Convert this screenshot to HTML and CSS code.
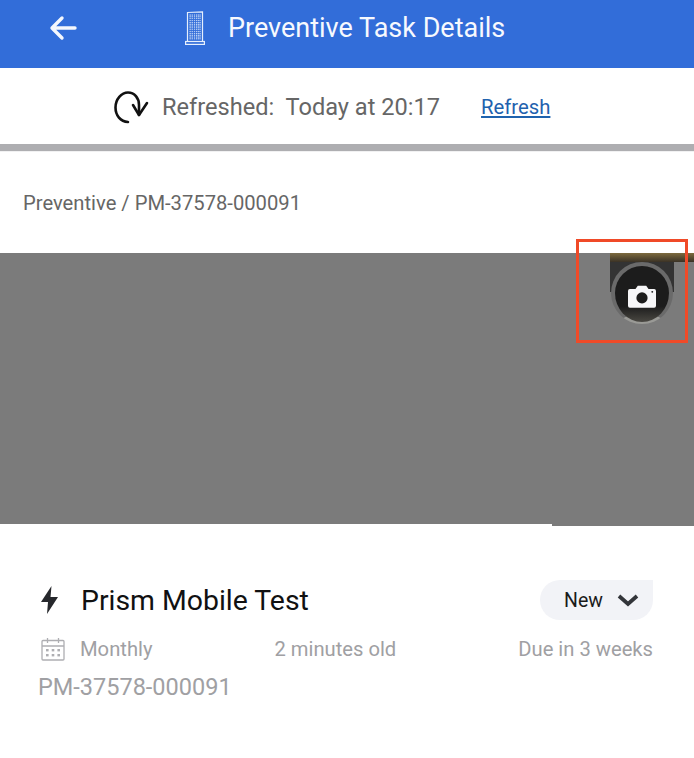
FILE: index.html
```html
<!DOCTYPE html>
<html lang="en">
<head>
<meta charset="UTF-8"/>
<title>Preventive Task Details</title>
<link rel="stylesheet" href="styles.css">
</head>
<body>
<header class="topbar">
 <svg class="back-icon" width="30" height="26" viewBox="0 0 30 26">
  <path d="M27 13H4M14 3L4 13l10 10" fill="none" stroke="#f4f7fd" stroke-width="3.400" stroke-linecap="round" stroke-linejoin="round"/>
 </svg>
 <svg class="building-icon" width="20" height="34" viewBox="0 0 20 34">
  <defs>
   <pattern id="windows" width="2.200" height="2.200" patternUnits="userSpaceOnUse">
    <rect width="1.300" height="1.300" fill="#cfdff9"/>
   </pattern>
  </defs>
  <path d="M2.500 1.500L17.500 .8V30.500H2.500z" fill="none" stroke="#e6effd" stroke-width="1.200"/>
  <rect x="4.200" y="3" width="11.800" height="26" fill="url(#windows)"/>
  <rect x=".6" y="30.500" width="18.800" height="2.900" fill="none" stroke="#e6effd" stroke-width="1.200"/>
 </svg>
 <h1 class="title">Preventive Task Details</h1>
</header>

<div class="refresh-bar">
 <svg class="refresh-icon" width="36" height="34" viewBox="0 0 36 34">
  <path d="M15 32C7.500 31.500 2.500 25.500 2.500 17.500C2.500 9 8.500 2.500 15 2.500C21.500 2.500 26 8 26 15V25" fill="none" stroke="#111" stroke-width="2.600" stroke-linecap="round"/>
  <path d="M20 15L26 25L34 13" fill="none" stroke="#111" stroke-width="2.600" stroke-linecap="round" stroke-linejoin="round"/>
 </svg>
 <span class="refresh-text">Refreshed:&nbsp; Today at 20:17</span>
 <a class="refresh-link" href="#">Refresh</a>
</div>

<p class="crumb">Preventive / PM-37578-000091</p>

<div class="hero">
 <div class="photo-strip"></div>
 <div class="photo-patch"></div>
 <div class="camera-btn">
  <svg width="28" height="23" viewBox="0 0 30 24">
   <path d="M2 4h6l2.500-3.500h9L22 4h6a2 2 0 0 1 2 2v16a2 2 0 0 1-2 2H2a2 2 0 0 1-2-2V6a2 2 0 0 1 2-2z" fill="#f6f6f8"/>
   <circle cx="15" cy="13.500" r="6" fill="#1c1c1c"/>
   <circle cx="26" cy="7" r="1" fill="#1c1c1c"/>
  </svg>
 </div>
 <div class="hero-tail"></div>
 <div class="highlight"></div>
</div>

<section class="details">
 <div class="name-row">
  <svg class="bolt-icon" width="22" height="30" viewBox="0 0 22 30">
   <path d="M12.500 1L2 17h7L8 29l11-17h-7.500z" fill="#26282c"/>
  </svg>
  <h2 class="task-name">Prism Mobile Test</h2>
  <div class="status">
   New
   <svg width="24" height="14" viewBox="0 0 24 14">
    <path d="M3 3l9 8 9-8" fill="none" stroke="#33353a" stroke-width="3.800"/>
   </svg>
  </div>
 </div>
 <div class="meta-row">
  <span class="freq">
   <svg width="24" height="24" viewBox="0 0 24 24">
    <g fill="none" stroke="#aeaeb2" stroke-width="1.300">
     <rect x="1" y="3.500" width="22" height="19.500" rx="1"/>
     <path d="M1 9h22M6.500 1v5M17.500 1v5"/>
    </g>
    <g fill="#aeaeb2">
     <rect x="5" y="12" width="2.600" height="2.400"/>
     <rect x="10.700" y="12" width="2.600" height="2.400"/>
     <rect x="16.400" y="12" width="2.600" height="2.400"/>
     <rect x="5" y="17" width="2.600" height="2.400"/>
     <rect x="10.700" y="17" width="2.600" height="2.400"/>
     <rect x="16.400" y="17" width="2.600" height="2.400"/>
    </g>
   </svg>
   Monthly
  </span>
  <span class="age">2 minutes old</span>
  <span class="due">Due in 3 weeks</span>
 </div>
 <p class="task-id">PM-37578-000091</p>
</section>
</body>
</html>
```

FILE: styles.css
```css
html, body{
 margin: 0;
 padding: 0;
}
body{
 height: 758px;
 overflow: hidden;
 background: #fff;
 font-family: Roboto, "Liberation Sans", sans-serif;
}
.topbar{
 display: flex;
 align-items: center;
 height: 68px;
 padding: 0 0 13px 48px;
 background: #326dd9;
 box-sizing: border-box;
}
.building-icon{
 margin: 0 0 0 107px;
}
.title{
 margin: 0 0 0 23px;
 color: #f7f9fe;
 font-size: 27px;
 font-weight: 400;
}
.refresh-bar{
 display: flex;
 align-items: center;
 height: 76px;
 padding: 2px 0 0 113px;
 box-sizing: border-box;
 margin-bottom: 8px;
 box-shadow: 0 7px 1px #aeaeb1;
}
.refresh-text{
 margin-left: 13px;
 color: #666;
 font-size: 23.600px;
}
.refresh-link{
 margin-left: 41px;
 color: #1f62ae;
 font-size: 20.300px;
}
.crumb{
 margin: 0;
 padding: 40px 0 0 23px;
 height: 61px;
 color: #666;
 font-size: 20.200px;
 line-height: 22px;
}
.hero{
 position: relative;
 height: 271px;
 background: #7b7b7b;
}
.photo-strip{
 position: absolute;
 left: 610px;
 right: 0;
 top: 0;
 height: 9px;
 background: linear-gradient(#7d6a3e, #3a3226);
}
.photo-patch{
 position: absolute;
 left: 610px;
 top: 9px;
 width: 64px;
 height: 30px;
 background: #333;
}
.camera-btn{
 position: absolute;
 left: 611px;
 top: 9px;
 width: 62px;
 height: 62px;
 box-sizing: border-box;
 border: 4px solid #6a6a6a;
 border-bottom: 2px solid #9a9a96;
 border-radius: 50%;
 background: linear-gradient(#1c1c1c 72%, #4a4842);
 display: flex;
 align-items: center;
 justify-content: center;
}
.camera-btn svg{
 margin-top: 4px;
}
.hero-tail{
 position: absolute;
 left: 552px;
 right: 0;
 top: 100%;
 height: 2px;
 background: #7b7b7b;
}
.highlight{
 position: absolute;
 left: 576px;
 top: -14px;
 width: 112px;
 height: 104px;
 box-sizing: border-box;
 border: 3px solid #f04a28;
}
.details{
 padding: 56px 41px 0 39px;
}
.name-row{
 display: flex;
 align-items: center;
 height: 40px;
}
.bolt-icon{
 flex: none;
}
.task-name{
 margin: 0 0 0 20px;
 flex: 1;
 color: #111;
 font-size: 28.400px;
 font-weight: 400;
}
.status{
 display: flex;
 align-items: center;
 gap: 13px;
 height: 40px;
 padding: 0 1px 0 24px;
 width: 113px;
 box-sizing: border-box;
 border-radius: 20px 0 20px 20px;
 background: #f2f3f7;
 color: #1a1a1a;
 font-size: 19.500px;
}
.meta-row{
 display: flex;
 justify-content: space-between;
 align-items: center;
 margin-top: 13px;
 height: 32px;
 color: #a0a0a3;
 font-size: 20.200px;
}
.freq{
 display: flex;
 align-items: center;
 gap: 15px;
 padding-left: 2px;
}
.task-id{
 margin: 8px 0 0 -1px;
 color: #a0a0a3;
 font-size: 23.500px;
}
```
